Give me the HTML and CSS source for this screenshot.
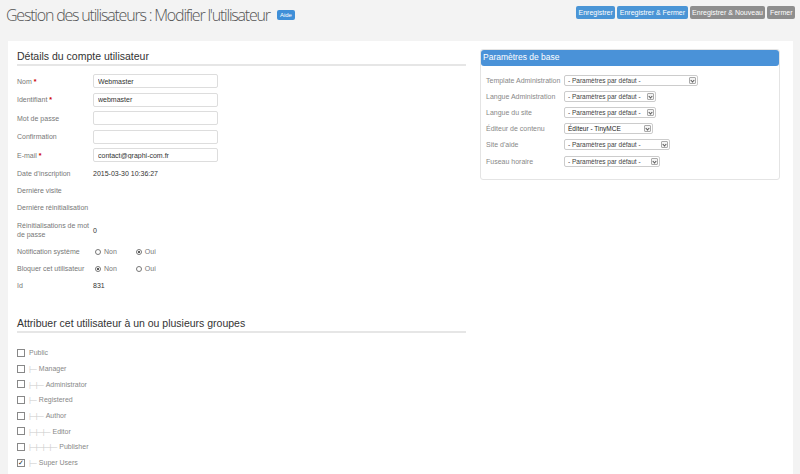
FILE: index.html
```html
<!DOCTYPE html>
<html lang="fr">
<head>
    <meta charset="UTF-8">
    <title>Gestion des utilisateurs : Modifier l'utilisateur</title>
    <link rel="stylesheet" href="styles.css">
</head>
<body>
    <div class="header">
        <h1>Gestion des utilisateurs : Modifier l'utilisateur <span class="badge">Aide</span></h1>
        <div class="toolbar">
            <button class="btn btn-blue">Enregistrer</button>
            <button class="btn btn-blue">Enregistrer &amp; Fermer</button>
            <button class="btn btn-gray">Enregistrer &amp; Nouveau</button>
            <button class="btn btn-gray">Fermer</button>
        </div>
    </div>

    <div class="content">
        <div class="main">
            <div class="col-left">
                <h2 class="legend">Détails du compte utilisateur</h2>

                <div class="row"><label>Nom <span class="star">*</span></label><input class="field" value="Webmaster"></div>
                <div class="row"><label>Identifiant <span class="star">*</span></label><input class="field" value="webmaster"></div>
                <div class="row"><label>Mot de passe</label><input class="field" value=""></div>
                <div class="row"><label>Confirmation</label><input class="field" value=""></div>
                <div class="row row-mail"><label>E-mail <span class="star">*</span></label><input class="field" value="contact@graphi-com.fr"></div>
                <div class="row text"><label>Date d'inscription</label><span class="val">2015-03-30 10:36:27</span></div>
                <div class="row text"><label>Dernière visite</label><span class="val"></span></div>
                <div class="row text"><label>Dernière réinitialisation</label><span class="val"></span></div>
                <div class="row text tall"><label class="wrap">Réinitialisations de mot de passe</label><span class="val">0</span></div>
                <div class="row text">
                    <label>Notification système</label>
                    <span class="radios">
                        <span class="radio"><span class="dot"></span>Non</span>
                        <span class="radio"><span class="dot on"></span>Oui</span>
                    </span>
                </div>
                <div class="row text">
                    <label>Bloquer cet utilisateur</label>
                    <span class="radios">
                        <span class="radio"><span class="dot on"></span>Non</span>
                        <span class="radio"><span class="dot"></span>Oui</span>
                    </span>
                </div>
                <div class="row text"><label>Id</label><span class="val">831</span></div>
            </div>

            <div class="col-right">
                <div class="panel">
                    <div class="panel-head">Paramètres de base</div>
                    <div class="panel-body">
                        <div class="prow"><label>Template Administration</label><span class="select w134">- Paramètres par défaut -</span></div>
                        <div class="prow"><label>Langue Administration</label><span class="select w92">- Paramètres par défaut -</span></div>
                        <div class="prow"><label>Langue du site</label><span class="select w92">- Paramètres par défaut -</span></div>
                        <div class="prow"><label>Éditeur de contenu</label><span class="select w89 dark">Éditeur - TinyMCE</span></div>
                        <div class="prow"><label>Site d'aide</label><span class="select w106">- Paramètres par défaut -</span></div>
                        <div class="prow"><label>Fuseau horaire</label><span class="select w96">- Paramètres par défaut -</span></div>
                    </div>
                </div>
            </div>
        </div>

        <div class="groups">
            <h2 class="legend">Attribuer cet utilisateur à un ou plusieurs groupes</h2>
            <ul class="tree">
                <li><span class="check"></span>Public</li>
                <li><span class="check"></span><span class="gi">|—</span>Manager</li>
                <li><span class="check"></span><span class="gi">|—|—</span>Administrator</li>
                <li><span class="check"></span><span class="gi">|—</span>Registered</li>
                <li><span class="check"></span><span class="gi">|—|—</span>Author</li>
                <li><span class="check"></span><span class="gi">|—|—|—</span>Editor</li>
                <li><span class="check"></span><span class="gi">|—|—|—|—</span>Publisher</li>
                <li><span class="check on">✓</span><span class="gi">|—</span>Super Users</li>
            </ul>
        </div>
    </div>
</body>
</html>
```

FILE: styles.css
```css
body {
    margin: 0;
    background: #f3f3f3;
    font-family: "Liberation Sans", Arial, sans-serif;
    color: #555;
    overflow: hidden;
}
.header {
    height: 41px;
    display: flex;
    justify-content: space-between;
    align-items: flex-start;
    padding: 0 5px 0 6px;
}
h1 {
    margin: 4px 0 0;
    font-family: "Open Sans", sans-serif;
    font-weight: 300;
    font-size: 16px;
    letter-spacing: -1.2px;
    color: #555;
    display: flex;
    align-items: center;
}
.badge {
    display: inline-block;
    margin-left: 7px;
    background: #3f8fd8;
    color: #fff;
    font-family: "Liberation Sans", sans-serif;
    font-size: 6px;
    letter-spacing: 0;
    padding: 2px 3px;
    border-radius: 2px;
    line-height: 6px;
}
.toolbar {
    display: flex;
    gap: 2px;
    margin-top: 6px;
}
.btn {
    border: none;
    color: #fff;
    font-family: "Liberation Sans", sans-serif;
    font-size: 7px;
    height: 13px;
    padding: 0 2.5px;
    border-radius: 2px;
    line-height: 13px;
}
.btn-blue { background: #4a95d6; }
.btn-gray { background: #8e8e8e; }

.content {
    background: #fff;
    margin: 0 7px 0 8px;
    padding: 9px 9px 20px;
}
.main {
    display: flex;
    gap: 14px;
}
.col-left {
    width: 449px;
}
.col-right {
    flex: 1;
    padding-right: 4px;
}
.legend {
    margin: 0;
    font-size: 10.5px;
    font-weight: normal;
    color: #333;
    padding: 0 0 2px;
    border-bottom: 2px solid #e6e6e6;
}
.col-left .legend {
    margin-bottom: 8px;
}
.row {
    display: flex;
    align-items: center;
    margin-bottom: 4.5px;
    font-size: 7px;
}
.row label {
    width: 76px;
    color: #777;
    flex-shrink: 0;
    line-height: 9px;
    white-space: nowrap;
}
.row label.wrap {
    white-space: normal;
    width: 72px;
    margin-right: 4px;
}
.row.text {
    min-height: 13px;
    margin-bottom: 4px;
}
.row.tall {
    padding: 3px 0 2px;
}
.row-mail {
    margin-top: 1.5px;
    margin-bottom: 5px;
}
.star {
    color: #c00;
    font-weight: bold;
}
.field {
    width: 125px;
    height: 14px;
    box-sizing: border-box;
    border: 1px solid #ddd;
    border-radius: 2px;
    padding: 0 4px;
    font-family: "Liberation Sans", sans-serif;
    font-size: 7px;
    color: #333;
    margin: 0;
}
.val {
    color: #333;
    font-size: 7px;
}
.radios {
    display: flex;
    gap: 17px;
}
.radio {
    display: flex;
    align-items: center;
    gap: 3px;
    color: #777;
    margin-left: 2px;
}
.dot {
    width: 6px;
    height: 6px;
    border: 1px solid #777;
    border-radius: 50%;
    box-sizing: border-box;
    position: relative;
}
.dot.on::after {
    content: "";
    position: absolute;
    left: 1px;
    top: 1px;
    width: 2px;
    height: 2px;
    border-radius: 50%;
    background: #222;
}

.panel {
    margin-top: -1px;
    border: 1px solid #e4e4e4;
    border-radius: 3px;
    padding-bottom: 10px;
}
.panel-head {
    background: #4a92d8;
    color: #fff;
    font-size: 8.5px;
    height: 16px;
    line-height: 15px;
    padding: 0 2px;
    border-radius: 3px;
}
.panel-body {
    padding: 6px 0 0 5px;
}
.prow {
    display: flex;
    align-items: center;
    height: 16.2px;
    font-size: 7px;
}
.prow label {
    width: 78px;
    color: #888;
    white-space: nowrap;
}
.select {
    height: 11px;
    box-sizing: border-box;
    border: 1px solid #ccc;
    border-radius: 2px;
    font-size: 6.5px;
    line-height: 9px;
    padding: 0 3px;
    color: #444;
    position: relative;
}
.select::after {
    content: "";
    position: absolute;
    right: 1px;
    top: 1px;
    width: 5px;
    height: 5px;
    border: 1px solid #aaa;
    border-radius: 1px;
    background: #f4f4f4;
}
.select::before {
    content: "";
    position: absolute;
    right: 3px;
    top: 3px;
    width: 2px;
    height: 2px;
    border-right: 1px solid #555;
    border-bottom: 1px solid #555;
    transform: rotate(45deg);
    z-index: 1;
}
.select.dark { color: #222; }
.w134 { width: 134px; }
.w92 { width: 92px; }
.w89 { width: 89px; }
.w106 { width: 106px; }
.w96 { width: 96px; }

.groups {
    margin-top: 21px;
    width: 449px;
}
.groups .legend {
    padding-bottom: 2px;
}
.tree {
    list-style: none;
    margin: 12px 0 0;
    padding: 0;
}
.tree li {
    display: flex;
    align-items: center;
    height: 15.7px;
    font-size: 7px;
    color: #888;
}
.check {
    width: 6px;
    height: 6px;
    border: 1px solid #888;
    margin-right: 4px;
    font-size: 7px;
    line-height: 6px;
    text-align: center;
    color: #222;
}
.gi {
    color: #ccc;
    margin-right: 3px;
    letter-spacing: -1px;
}
```
